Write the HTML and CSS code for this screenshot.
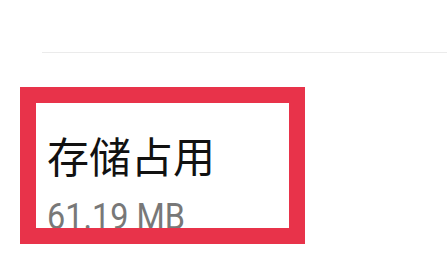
FILE: index.html
```html
<!DOCTYPE html>
<html lang="zh">
<head>
<meta charset="utf-8">
<link rel="stylesheet" href="styles.css">
</head>
<body>
<div class="divider"></div>
<div class="item">
  <div class="title">存储占用</div>
  <div class="sub">61.19 MB</div>
  <div class="highlight"></div>
</div>
</body>
</html>
```
FILE: styles.css
```css
html, body {
  margin: 0;
  padding: 0;
  background: #ffffff;
  width: 447px;
  height: 275px;
  overflow: hidden;
}
body {
  font-family: "Noto Sans", "Noto Sans CJK SC", sans-serif;
}
.divider {
  margin-top: 52px;
  margin-left: 42px;
  height: 1px;
  background: #ebebeb;
}
.item {
  position: relative;
  margin-top: 34px;
  height: 188px;
  padding: 43px 0 0 47px;
  box-sizing: border-box;
}
.title {
  font-family: "Noto Sans CJK SC", sans-serif;
  font-size: 42px;
  line-height: 50px;
  color: #111111;
}
.sub {
  font-family: Roboto, "Noto Sans", sans-serif;
  font-size: 36px;
  line-height: 40px;
  color: #787878;
  margin-top: 17px;
  transform: scaleX(0.9);
  transform-origin: left center;
  white-space: nowrap;
}
.highlight {
  position: absolute;
  left: 20px;
  top: 0;
  width: 285px;
  height: 157px;
  box-sizing: border-box;
  border: 16px solid #e8334a;
}
```
